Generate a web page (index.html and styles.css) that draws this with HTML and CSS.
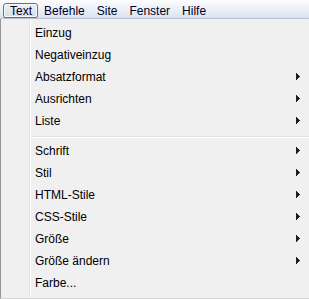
FILE: index.html
```html
<!DOCTYPE html>
<html lang="de">
<head>
<meta charset="utf-8">
<link rel="stylesheet" href="styles.css">
</head>
<body>
<div class="menubar">
  <span class="mb-item active">Text</span>
  <span class="mb-item">Befehle</span>
  <span class="mb-item">Site</span>
  <span class="mb-item">Fenster</span>
  <span class="mb-item">Hilfe</span>
</div>
<div class="menu">
  <div class="gutter"></div>
  <div class="items">
    <div class="row"><span>Einzug</span></div>
    <div class="row"><span>Negativeinzug</span></div>
    <div class="row"><span>Absatzformat</span><svg class="arrow" width="4" height="7" viewBox="0 0 4 7"><polygon points="0,0 4,3.5 0,7"/></svg></div>
    <div class="row"><span>Ausrichten</span><svg class="arrow" width="4" height="7" viewBox="0 0 4 7"><polygon points="0,0 4,3.5 0,7"/></svg></div>
    <div class="row"><span>Liste</span><svg class="arrow" width="4" height="7" viewBox="0 0 4 7"><polygon points="0,0 4,3.5 0,7"/></svg></div>
    <div class="sep"></div>
    <div class="row"><span>Schrift</span><svg class="arrow" width="4" height="7" viewBox="0 0 4 7"><polygon points="0,0 4,3.5 0,7"/></svg></div>
    <div class="row"><span>Stil</span><svg class="arrow" width="4" height="7" viewBox="0 0 4 7"><polygon points="0,0 4,3.5 0,7"/></svg></div>
    <div class="row"><span>HTML-Stile</span><svg class="arrow" width="4" height="7" viewBox="0 0 4 7"><polygon points="0,0 4,3.5 0,7"/></svg></div>
    <div class="row"><span>CSS-Stile</span><svg class="arrow" width="4" height="7" viewBox="0 0 4 7"><polygon points="0,0 4,3.5 0,7"/></svg></div>
    <div class="row"><span>Größe</span><svg class="arrow" width="4" height="7" viewBox="0 0 4 7"><polygon points="0,0 4,3.5 0,7"/></svg></div>
    <div class="row"><span>Größe ändern</span><svg class="arrow" width="4" height="7" viewBox="0 0 4 7"><polygon points="0,0 4,3.5 0,7"/></svg></div>
    <div class="row"><span>Farbe...</span></div>
  </div>
</div>
</body>
</html>
```
FILE: styles.css
```css
html, body {
  margin: 0;
  padding: 0;
}
body {
  width: 309px;
  height: 299px;
  overflow: hidden;
  background: #f0f0f0;
  font-family: "Liberation Sans", Arial, sans-serif;
  font-size: 12px;
  color: #000;
}
.menubar {
  height: 18px;
  border-bottom: 1px solid #b8c0d2;
  background: linear-gradient(#fdfdfe, #e9eef7 60%, #dbe2f0);
  display: flex;
  align-items: flex-end;
  padding-left: 3px;
  box-sizing: content-box;
}
.mb-item {
  height: 14px;
  line-height: 14px;
  padding: 0 5px;
  border: 1px solid transparent;
  border-bottom: none;
  color: #000022;
}
.mb-item.active {
  border: 1px solid #6e6e6e;
  height: 13px;
  padding: 0 5px 0 6px;
  border-radius: 3px 3px 2px 2px;
  background: linear-gradient(#eef1f6, #d6dce6);
  box-shadow: inset 0 0 0 1px #f8f9fb;
}
.menu {
  display: flex;
  height: 279px;
  border-left: 1px solid #979797;
  border-bottom: 1px solid #d4d4d4;
  background: #f0f0f0;
}
.gutter {
  width: 28px;
  border-right: 1px solid #e2e3e3;
  box-shadow: 1px 0 0 #ffffff;
  flex: none;
}
.items {
  flex: 1;
  padding: 3px 0 0 1px;
}
.row {
  height: 22px;
  display: flex;
  align-items: center;
  justify-content: space-between;
  padding: 0 9px 0 0;
  line-height: 14px;
}
.row span {
  padding-left: 4px;
}
.arrow {
  fill: #1e1e1e;
  shape-rendering: crispEdges;
  margin-top: -1px;
}
.sep {
  height: 1px;
  margin: 4px 0 2px 0;
  border-bottom: 1px solid #ffffff;
  background: #e0e0e0;
}
```
